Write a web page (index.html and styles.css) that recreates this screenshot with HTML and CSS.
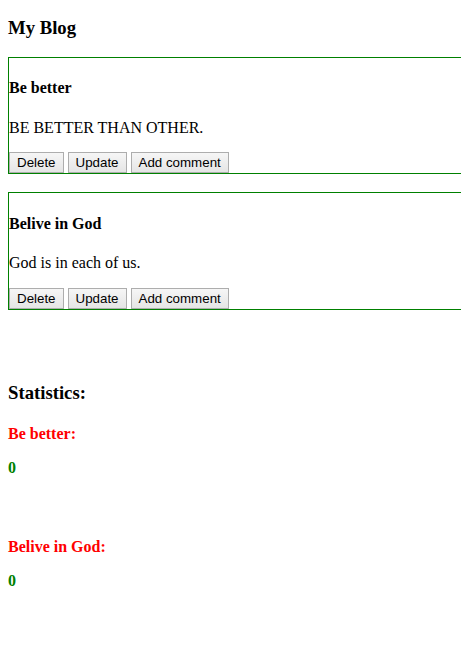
FILE: index.html
```html
<!DOCTYPE html>
<html>
<head>
<meta charset="utf-8">
<title>My Blog</title>
<link rel="stylesheet" href="styles.css">
</head>
<body>
<h3 class="title">My Blog</h3>
<div class="post">
  <h4 class="post-title">Be better</h4>
  <p class="post-body">BE BETTER THAN OTHER.</p>
  <div class="actions">
    <button class="btn">Delete</button>
    <button class="btn">Update</button>
    <button class="btn">Add comment</button>
  </div>
</div>
<div class="post">
  <h4 class="post-title">Belive in God</h4>
  <p class="post-body">God is in each of us.</p>
  <div class="actions">
    <button class="btn">Delete</button>
    <button class="btn">Update</button>
    <button class="btn">Add comment</button>
  </div>
</div>
<h3 class="stats-title">Statistics:</h3>
<div class="stat">
  <h4 class="stat-name">Be better:</h4>
  <h4 class="stat-count">0</h4>
</div>
<div class="stat">
  <h4 class="stat-name">Belive in God:</h4>
  <h4 class="stat-count">0</h4>
</div>
</body>
</html>
```
FILE: styles.css
```css
html {
  overflow-x: hidden;
}
body {
  margin: 0;
  padding: 0 8px;
  font-family: "Liberation Serif", "Times New Roman", serif;
  font-size: 16px;
  color: #000;
  background: #fff;
}
.title {
  font-size: 18.72px;
  font-weight: bold;
  margin: 17px 0 17.5px;
}
.post {
  border: 1px solid #008000;
  width: 520px;
  margin-bottom: 18px;
}
.post-title {
  font-size: 16px;
  font-weight: bold;
  margin: 21.5px 0;
}
.post-body {
  margin: 0 0 15.5px;
}
.actions {
  display: flex;
  gap: 4px;
  height: 21px;
  align-items: flex-start;
}
.btn {
  font-family: "Liberation Sans", Arial, sans-serif;
  font-size: 13.333px;
  line-height: 15px;
  color: #000;
  padding: 1px 7px;
  height: 21px;
  border: 1px solid #adadad;
  border-radius: 0;
  background: linear-gradient(#f6f6f6, #e5e5e5);
  box-sizing: border-box;
  margin: 0;
}
.stats-title {
  font-size: 18.72px;
  font-weight: bold;
  margin: 72px 0 0;
}
.stat-name {
  font-size: 16px;
  font-weight: bold;
  color: #ff0000;
  margin: 21px 0 0;
}
.stat-count {
  font-size: 16px;
  font-weight: bold;
  color: #008000;
  margin: 16px 0 0;
}
.stat + .stat .stat-name {
  margin-top: 61px;
}
```
